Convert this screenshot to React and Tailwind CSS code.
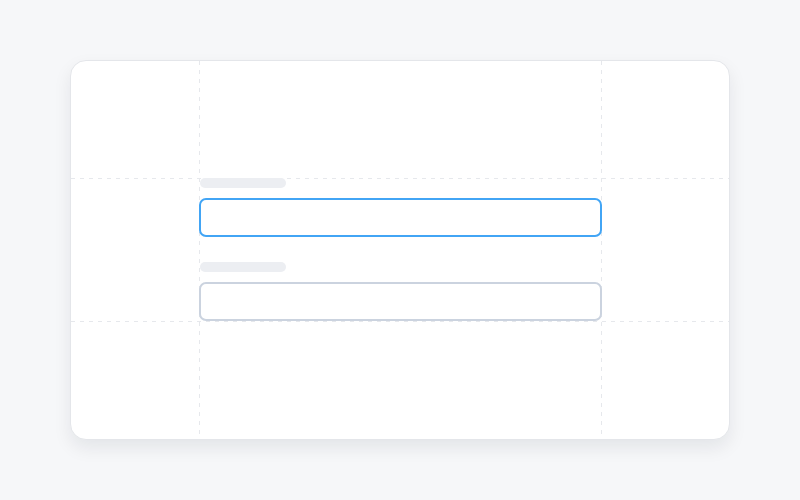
import React from "react";

const dashV =
  "bg-[linear-gradient(to_bottom,#e6e8ec_50%,transparent_50%)] bg-[length:1px_9px]";
const dashH =
  "bg-[linear-gradient(to_right,#e6e8ec_50%,transparent_50%)] bg-[length:9px_1px]";

function Field({ active }) {
  return (
    <div className="flex flex-col gap-[10px]">
      <div className="relative h-[10px] w-[86px] ml-px rounded-full bg-[#eceef2]" />
      <div
        className={`relative h-[39px] w-full rounded-[7px] border-2 bg-white ${
          active ? "border-[#42a5f5]" : "border-[#cbd3df]"
        }`}
      />
    </div>
  );
}

export default function App() {
  return (
    <div className="min-h-screen w-full bg-[#f6f7f9] flex items-start justify-center pt-[60px]">
      <div className="relative w-[660px] h-[380px] overflow-hidden rounded-[16px] border border-[#e4e6ea] bg-white shadow-[0_8px_18px_rgba(15,23,42,0.08)]">
        {/* guide lines */}
        <div className={`absolute top-0 bottom-0 left-[128px] w-px ${dashV}`} />
        <div className={`absolute top-0 bottom-0 left-[530px] w-px ${dashV}`} />
        <div className={`absolute left-0 right-0 top-[117px] h-px ${dashH}`} />
        <div className={`absolute left-0 right-0 top-[260px] h-px ${dashH}`} />

        <div className="relative mx-auto mt-[117px] w-[403px] flex flex-col gap-[25px]">
          <Field active />
          <Field />
        </div>
      </div>
    </div>
  );
}
